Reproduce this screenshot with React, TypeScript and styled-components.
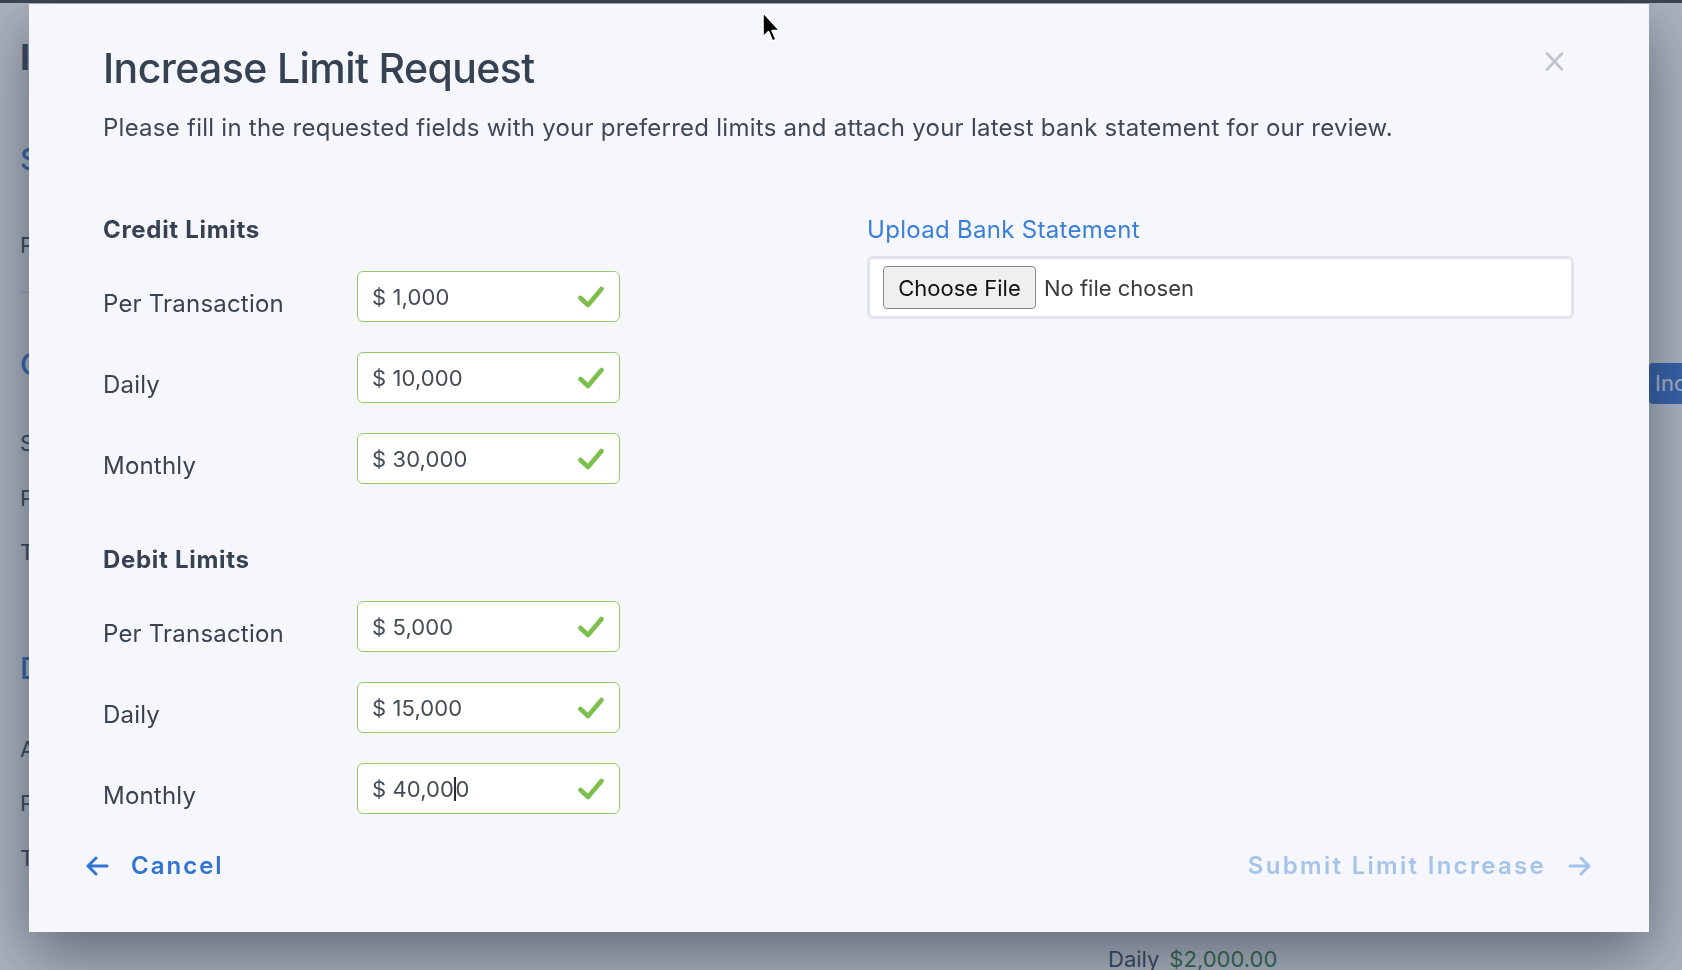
import React from "react";
import styled, { createGlobalStyle } from "styled-components";

const Global = createGlobalStyle`
  html, body { margin: 0; padding: 0; }
  body {
    width: 1682px;
    height: 970px;
    overflow: hidden;
    background: #ffffff;
    font-family: Inter, "Noto Sans", sans-serif;
  }
  * { box-sizing: border-box; }
`;

/* ---------- background page (under the overlay) ---------- */

const Page = styled.div`
  width: 1682px;
  height: 970px;
  border-top: 3px solid #3a3a3a;
  background: #ffffff;
  display: grid;
  grid-template-columns: 29px 1fr 574px;
  overflow: hidden;
`;

const PageColumn = styled.div<{ $pl: number }>`
  display: flex;
  flex-direction: column;
  padding-left: ${(p) => p.$pl}px;
  white-space: nowrap;
  overflow: hidden;
`;

const BgText = styled.div<{ $mt: number; $blue?: boolean; $big?: boolean }>`
  margin-top: ${(p) => p.$mt}px;
  font-size: ${(p) => (p.$big ? 36 : p.$blue ? 30 : 22)}px;
  line-height: 30px;
  font-weight: ${(p) => (p.$big ? 700 : p.$blue ? 500 : 400)};
  color: ${(p) => (p.$blue ? "#2f74d0" : "#374151")};
`;

const BgRule = styled.div<{ $mt: number }>`
  margin-top: ${(p) => p.$mt}px;
  height: 1px;
  background: #d9dde4;
`;

const BgButtonRow = styled.div`
  margin-top: 360px;
  height: 41px;
  padding-left: 541px;
  display: flex;
`;

const BgButton = styled.div`
  background: #2f6fd6;
  color: #fff;
  font-size: 22px;
  line-height: 41px;
  padding: 0 16px 0 6px;
  border-radius: 4px;
`;

const BgAmount = styled.span`
  color: #2f7a2f;
  margin-left: 10px;
`;

/* ---------- overlay + modal ---------- */

const Overlay = styled.div`
  position: fixed;
  inset: 0;
  background: rgba(66, 84, 112, 0.44);
`;

const Modal = styled.div`
  position: fixed;
  left: 29px;
  top: 4px;
  width: 1620px;
  height: 928px;
  background: #f5f7fc;
  box-shadow: 0 22px 60px rgba(20, 28, 45, 0.5);
  display: flex;
  flex-direction: column;
  color: #374151;
`;

const CloseButton = styled.div`
  position: absolute;
  top: 47px;
  right: 85px;
  width: 19px;
  height: 21px;
  display: flex;
`;

const Body = styled.div`
  padding: 40px 75px 0 74px;
`;

const Title = styled.h1`
  margin: 0;
  font-size: 41px;
  line-height: 48px;
  font-weight: 500;
  letter-spacing: -0.6px;
  color: #364152;
`;

const Lead = styled.p`
  margin: 21px 0 0;
  font-size: 24px;
  line-height: 30px;
  letter-spacing: 0.25px;
  color: #3f4756;
`;

const Columns = styled.div`
  margin-top: 72px;
  display: grid;
  grid-template-columns: 1fr 1fr;
  column-gap: 57px;
`;

const Column = styled.div`
  display: flex;
  flex-direction: column;
`;

const SectionTitle = styled.h2<{ $mt?: number }>`
  margin: ${(p) => p.$mt ?? 0}px 0 0;
  font-size: 24px;
  line-height: 30px;
  font-weight: 700;
  letter-spacing: 0.7px;
  color: #374151;
`;

const Rows = styled.div`
  margin-top: 26px;
  display: flex;
  flex-direction: column;
  gap: 30px;
`;

const Row = styled.div`
  display: grid;
  grid-template-columns: 254px 263px;
`;

const Label = styled.div`
  padding-top: 18px;
  font-size: 24px;
  line-height: 30px;
  letter-spacing: 0.2px;
  color: #3a4250;
  white-space: nowrap;
`;

const InputBox = styled.div`
  height: 51px;
  background: #ffffff;
  border: 1.5px solid #95ca6c;
  border-radius: 6px;
  display: flex;
  align-items: center;
  justify-content: space-between;
  padding: 0 15px 0 14px;
`;

const Value = styled.span`
  font-size: 22px;
  line-height: 30px;
  letter-spacing: 0.1px;
  color: #454b55;
  display: inline-flex;
  align-items: center;
`;

const Caret = styled.span`
  display: inline-block;
  width: 1.5px;
  height: 24px;
  background: #2a2a2a;
`;

const UploadLabel = styled.div`
  font-size: 24px;
  line-height: 30px;
  font-weight: 400;
  letter-spacing: 0.3px;
  color: #3a7fd9;
`;

const FileBox = styled.div`
  margin-top: 11px;
  height: 63px;
  background: #ffffff;
  border: 3px solid #e1e4ea;
  border-radius: 6px;
  display: flex;
  align-items: center;
  padding-left: 13px;
  gap: 8px;
`;

const FileButton = styled.div`
  width: 153px;
  height: 43px;
  background: #efefef;
  border: 1px solid #8a8a8a;
  border-radius: 4px;
  display: flex;
  align-items: center;
  justify-content: center;
  font-size: 22px;
  color: #111;
`;

const FileStatus = styled.span`
  font-size: 22px;
  color: #3a3a3a;
`;

const Footer = styled.div`
  margin-top: 36px;
  padding: 0 57px 0 56px;
  height: 32px;
  display: flex;
  align-items: center;
  justify-content: space-between;
`;

const FooterAction = styled.div<{ $muted?: boolean }>`
  display: flex;
  align-items: center;
  gap: 22px;
  font-size: 24px;
  line-height: 32px;
  font-weight: 600;
  letter-spacing: ${(p) => (p.$muted ? 2.3 : 2)}px;
  color: ${(p) => (p.$muted ? "#a6c4ea" : "#2f74d0")};
`;

const Pointer = styled.div`
  position: fixed;
  left: 761px;
  top: 11px;
  width: 22px;
  height: 34px;
`;

const Check = () => (
  <svg width="26" height="22" viewBox="0 0 26 22">
    <path
      d="M2.5 12 L10 19 L23.5 3"
      fill="none"
      stroke="#7cbf4c"
      strokeWidth="4.6"
      strokeLinecap="round"
      strokeLinejoin="round"
    />
  </svg>
);

const Arrow = ({ dir, color }: { dir: "left" | "right"; color: string }) => (
  <svg width="24" height="20" viewBox="0 0 24 20">
    {dir === "left" ? (
      <path
        d="M22 10 H3 M11 2 L3 10 L11 18"
        fill="none"
        stroke={color}
        strokeWidth="3"
        strokeLinecap="round"
        strokeLinejoin="round"
      />
    ) : (
      <path
        d="M2 10 H21 M13 2 L21 10 L13 18"
        fill="none"
        stroke={color}
        strokeWidth="3"
        strokeLinecap="round"
        strokeLinejoin="round"
      />
    )}
  </svg>
);

type Limit = { label: string; value: string; caretAt?: number };

const credit: Limit[] = [
  { label: "Per Transaction", value: "$ 1,000" },
  { label: "Daily", value: "$ 10,000" },
  { label: "Monthly", value: "$ 30,000" },
];

const debit: Limit[] = [
  { label: "Per Transaction", value: "$ 5,000" },
  { label: "Daily", value: "$ 15,000" },
  { label: "Monthly", value: "$ 40,000", caretAt: 7 },
];

const LimitRows = ({ items }: { items: Limit[] }) => (
  <Rows>
    {items.map((it) => (
      <Row key={it.label}>
        <Label>{it.label}</Label>
        <InputBox>
          <Value>
            {it.caretAt !== undefined ? (
              <>
                {it.value.slice(0, it.caretAt)}
                <Caret />
                {it.value.slice(it.caretAt)}
              </>
            ) : (
              it.value
            )}
          </Value>
          <Check />
        </InputBox>
      </Row>
    ))}
  </Rows>
);

export default function App() {
  return (
    <>
      <Global />
      <Page>
        <PageColumn $pl={20}>
          <BgText $mt={39} $big>
            I
          </BgText>
          <BgText $mt={72} $blue>
            S
          </BgText>
          <BgText $mt={56}>P</BgText>
          <BgRule $mt={32} />
          <BgText $mt={56} $blue>
            C
          </BgText>
          <BgText $mt={49}>S</BgText>
          <BgText $mt={25}>P</BgText>
          <BgText $mt={24}>T</BgText>
          <BgText $mt={86} $blue>
            D
          </BgText>
          <BgText $mt={51}>A</BgText>
          <BgText $mt={24}>P</BgText>
          <BgText $mt={25}>T</BgText>
        </PageColumn>
        <div />
        <PageColumn $pl={0}>
          <BgButtonRow>
            <BgButton>Increase Limit</BgButton>
          </BgButtonRow>
          <BgRule $mt={236} />
          <BgRule $mt={88} />
          <BgText $mt={216}>
            Daily<BgAmount>$2,000.00</BgAmount>
          </BgText>
        </PageColumn>
      </Page>

      <Overlay />

      <Modal>
        <CloseButton>
          <svg width="19" height="21" viewBox="0 0 19 21">
            <path
              d="M2 2.5 L17 18.5 M17 2.5 L2 18.5"
              stroke="#c0c5cd"
              strokeWidth="2.6"
              strokeLinecap="round"
            />
          </svg>
        </CloseButton>
        <Body>
          <Title>Increase Limit Request</Title>
          <Lead>
            Please fill in the requested fields with your preferred limits and attach your latest bank
            statement for our review.
          </Lead>
          <Columns>
            <Column>
              <SectionTitle>Credit Limits</SectionTitle>
              <LimitRows items={credit} />
              <SectionTitle $mt={61}>Debit Limits</SectionTitle>
              <LimitRows items={debit} />
            </Column>
            <Column>
              <UploadLabel>Upload Bank Statement</UploadLabel>
              <FileBox>
                <FileButton>Choose File</FileButton>
                <FileStatus>No file chosen</FileStatus>
              </FileBox>
            </Column>
          </Columns>
        </Body>
        <Footer>
          <FooterAction>
            <Arrow dir="left" color="#2f74d0" />
            Cancel
          </FooterAction>
          <FooterAction $muted>
            Submit Limit Increase
            <Arrow dir="right" color="#a6c4ea" />
          </FooterAction>
        </Footer>
      </Modal>

      <Pointer>
        <svg width="22" height="34" viewBox="0 0 22 34">
          <path
            d="M2 1.5 L2 26 L7.5 20.5 L11.5 30 L15 28.5 L11 19.5 L18.5 19.5 Z"
            fill="#000"
            stroke="#fff"
            strokeWidth="1.6"
            strokeLinejoin="round"
          />
        </svg>
      </Pointer>
    </>
  );
}
